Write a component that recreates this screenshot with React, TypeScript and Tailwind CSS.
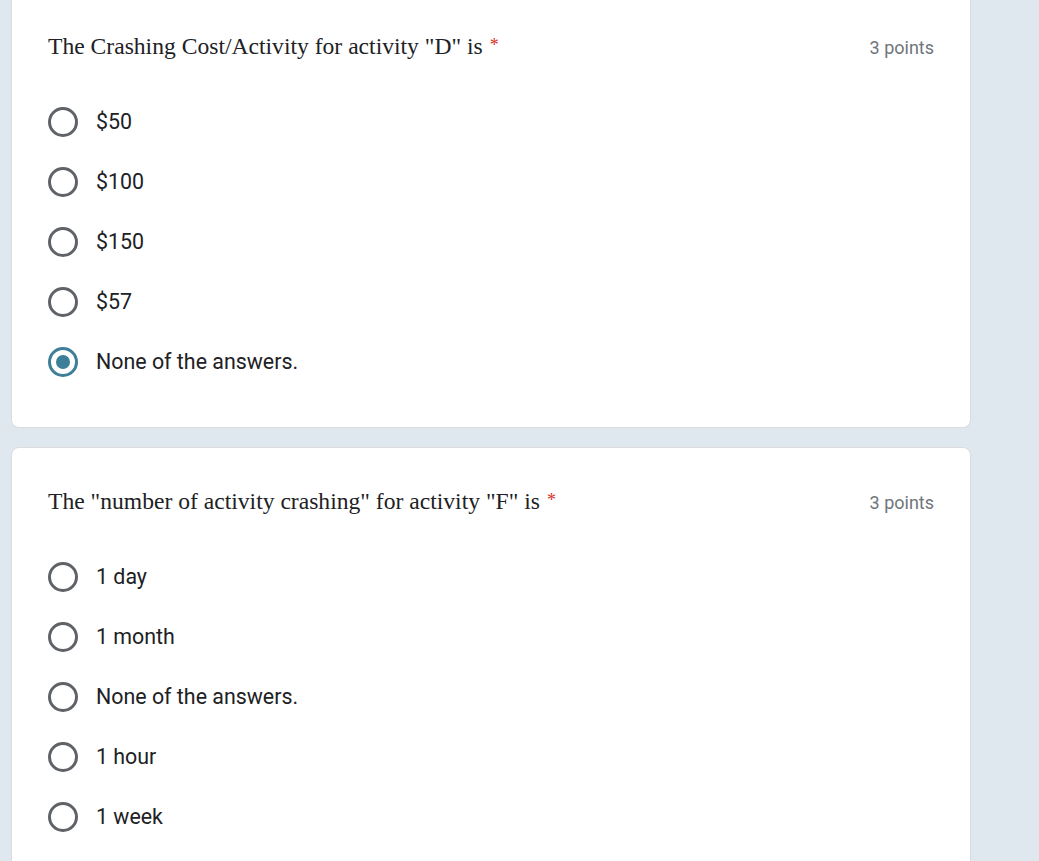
import React from "react";

type Q = { title: string; options: string[]; selected?: number; first?: boolean };

const questions: Q[] = [
  {
    title: 'The Crashing Cost/Activity for activity "D" is',
    options: ["$50", "$100", "$150", "$57", "None of the answers."],
    selected: 4,
    first: true,
  },
  {
    title: 'The "number of activity crashing" for activity "F" is',
    options: ["1 day", "1 month", "None of the answers.", "1 hour", "1 week"],
  },
];

function Radio({ checked }: { checked: boolean }) {
  return checked ? (
    <div className="flex h-[30px] w-[30px] shrink-0 items-center justify-center rounded-full border-[3px] border-[#3d7e98]">
      <div className="h-[14px] w-[14px] rounded-full bg-[#3d7e98]" />
    </div>
  ) : (
    <div className="h-[30px] w-[30px] shrink-0 rounded-full border-[3px] border-[#5f6368]" />
  );
}

function Card({ q }: { q: Q }) {
  return (
    <div
      className={
        "w-[960px] bg-white border border-[#dadce0] pl-[36px] pr-[36px] " +
        (q.first ? "rounded-b-[8px] border-t-0 pt-[31px] pb-[35px]" : "rounded-[8px] pt-[38px] pb-[36px]")
      }
    >
      <div className="flex items-center justify-between h-[32px]">
        <div
          className="text-[23.6px] leading-[32px] text-[#202124]"
          style={{ fontFamily: '"Liberation Serif", "DejaVu Serif", serif' }}
        >
          {q.title}
          <span className="relative top-[-3px] ml-[7px] text-[18px] text-[#d93025]">*</span>
        </div>
        <div
          className="text-[18px] text-[#70757a]"
          style={{ fontFamily: 'Roboto, "Liberation Sans", sans-serif' }}
        >
          3 points
        </div>
      </div>
      <div className="mt-[29px] flex flex-col">
        {q.options.map((o, i) => (
          <div key={i} className="flex h-[60px] items-center gap-[18px]">
            <Radio checked={q.selected === i} />
            <span
              className="text-[21.4px] text-[#202124]"
              style={{ fontFamily: 'Roboto, "Liberation Sans", sans-serif' }}
            >
              {o}
            </span>
          </div>
        ))}
      </div>
    </div>
  );
}

export default function App() {
  return (
    <div className="h-[861px] w-[1039px] overflow-hidden bg-[#dfe8ee] pl-[11px]">
      <div className="flex flex-col gap-[19px]">
        {questions.map((q, i) => (
          <Card key={i} q={q} />
        ))}
      </div>
    </div>
  );
}
